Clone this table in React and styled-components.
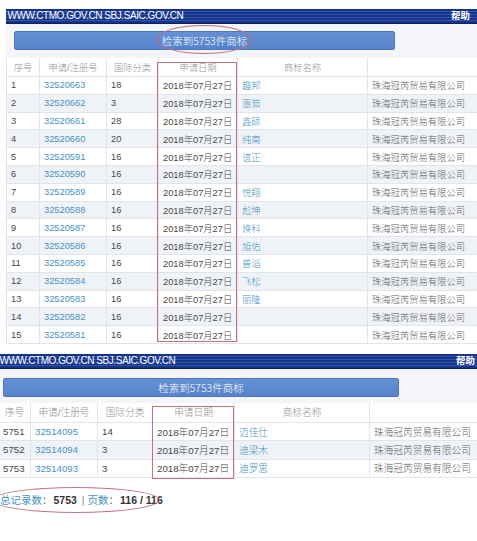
import React from "react";
import styled, { createGlobalStyle } from "styled-components";

const GlobalStyle = createGlobalStyle`
  html, body { margin: 0; padding: 0; background: #fff; }
  body { font-family: "Liberation Sans", "Noto Sans CJK SC", sans-serif; }
  #root { width: 477px; }
`;

const Page = styled.div`
  width: 477px;
  height: 541px;
  overflow: hidden;
  background: #fff;
`;

const Section = styled.section`
  position: relative;
  margin-left: ${(p) => p.$ml}px;
  margin-top: ${(p) => p.$mt}px;
`;

const TopBar = styled.div`
  height: 15px;
  box-sizing: border-box;
  display: flex;
  align-items: center;
  justify-content: space-between;
  padding: 0 ${(p) => p.$pr}px 0 1.5px;
  color: #fff;
  background: repeating-linear-gradient(
    180deg,
    #16338a 0px,
    #16338a 2px,
    #3457aa 2px,
    #3457aa 3px
  );
  border-bottom: 1px solid #0b215f;
`;

const Site = styled.span`
  font-family: "Liberation Sans", sans-serif;
  font-size: 10px;
  letter-spacing: -0.45px;
  line-height: 1;
`;

const Help = styled.span`
  font-family: "Noto Sans CJK SC", sans-serif;
  font-size: 9.5px;
  font-weight: bold;
  line-height: 1;
`;

const SearchArea = styled.div`
  height: 34px;
  box-sizing: border-box;
  background: #f3f5f8;
  padding-top: ${(p) => p.$pt}px;
  padding-left: ${(p) => p.$pl}px;
`;

const SearchButton = styled.div`
  width: ${(p) => p.$w}px;
  height: 19px;
  box-sizing: border-box;
  display: flex;
  align-items: center;
  justify-content: center;
  background: linear-gradient(180deg, #6490d5 0%, #5683cb 100%);
  border: 1px solid #4d77bc;
  border-radius: 2px;
  color: #fff;
  font-family: "Noto Sans CJK SC", sans-serif;
  font-weight: 300;
  font-size: 10.5px;
`;

const Table = styled.div`
  border-left: 1px solid #e1e5ea;
  font-size: ${(p) => p.$fs}px;
  font-weight: 300;
`;

const Row = styled.div`
  display: grid;
  grid-template-columns: ${(p) => p.$cols};
  height: ${(p) => p.$h}px;
  box-sizing: border-box;
  border-bottom: 1px solid #e1e5ea;
  background: ${(p) => (p.$alt ? "#eff3f8" : "#fff")};
`;

const Cell = styled.div`
  display: flex;
  align-items: center;
  justify-content: ${(p) => (p.$head ? "center" : "flex-start")};
  padding-left: ${(p) => (p.$head ? 0 : 4)}px;
  border-right: 1px solid #e1e5ea;
  white-space: nowrap;
  overflow: hidden;
  color: ${(p) =>
    p.$head ? "#939393" : p.$link ? "#4592c2" : p.$muted ? "#5f5f5f" : "#474747"};
  &:last-child {
    border-right: none;
  }
`;

const Mark = styled.div`
  position: absolute;
  left: ${(p) => p.$x}px;
  top: ${(p) => p.$y}px;
  width: ${(p) => p.$w}px;
  height: ${(p) => p.$hh}px;
  box-sizing: border-box;
  border: 1px solid #c9707e;
  border-radius: ${(p) => (p.$round ? "50%" : "0")};
  pointer-events: none;
`;

const Footer = styled.div`
  position: relative;
  margin-top: 9px;
  height: 26px;
  display: flex;
  align-items: center;
  font-size: 10.5px;
  color: #666;
  white-space: nowrap;
`;

const FooterLink = styled.span`
  color: #4592c2;
`;

const FooterValue = styled.b`
  color: #333;
  margin: 0 3px 0 1px;
`;

const Sep = styled.span`
  color: #888;
  margin: 0 3px 0 2px;
`;

const top = [
  ["1", "32520663", "18", "趣邦"],
  ["2", "32520662", "3", "惠茹"],
  ["3", "32520661", "28", "鑫硕"],
  ["4", "32520660", "20", "纯南"],
  ["5", "32520591", "16", "谊正"],
  ["6", "32520590", "16", ""],
  ["7", "32520589", "16", "悦翔"],
  ["8", "32520588", "16", "彪坤"],
  ["9", "32520587", "16", "焕科"],
  ["10", "32520586", "16", "旭佑"],
  ["11", "32520585", "16", "普滔"],
  ["12", "32520584", "16", "飞松"],
  ["13", "32520583", "16", "丽隆"],
  ["14", "32520582", "16", ""],
  ["15", "32520581", "16", ""],
];

const bottom = [
  ["5751", "32514095", "14", "迈佳仕"],
  ["5752", "32514094", "3", "迪梁木"],
  ["5753", "32514093", "3", "迪罗思"],
];

const DATE = "2018年07月27日";
const APPLICANT = "珠海冠芮贸易有限公司";

function Block({ cfg, rows }) {
  return (
    <Section $ml={cfg.ml} $mt={cfg.mt}>
      <TopBar $pr={cfg.helpPr}>
        <Site>WWW.CTMO.GOV.CN SBJ.SAIC.GOV.CN</Site>
        <Help>帮助</Help>
      </TopBar>
      <SearchArea $pt={cfg.btnPt} $pl={cfg.btnPl}>
        <SearchButton $w={cfg.btnW}>检索到5753件商标</SearchButton>
      </SearchArea>
      <Table $fs={cfg.fs}>
        <Row $cols={cfg.cols} $h={cfg.headH}>
          <Cell $head>序号</Cell>
          <Cell $head>申请/注册号</Cell>
          <Cell $head>国际分类</Cell>
          <Cell $head>申请日期</Cell>
          <Cell $head>商标名称</Cell>
          <Cell $head></Cell>
        </Row>
        {rows.map((r, i) => (
          <Row key={r[0]} $cols={cfg.cols} $h={cfg.rowH} $alt={i % 2 === 1}>
            <Cell>{r[0]}</Cell>
            <Cell $link>{r[1]}</Cell>
            <Cell>{r[2]}</Cell>
            <Cell>{DATE}</Cell>
            <Cell $link>{r[3]}</Cell>
            <Cell $muted>{APPLICANT}</Cell>
          </Row>
        ))}
      </Table>
      <Mark $x={cfg.box.x} $y={cfg.box.y} $w={cfg.box.w} $hh={cfg.box.h} />
      {cfg.oval && (
        <Mark $round $x={cfg.oval.x} $y={cfg.oval.y} $w={cfg.oval.w} $hh={cfg.oval.h} />
      )}
    </Section>
  );
}

const cfgTop = {
  ml: 6,
  mt: 9,
  helpPr: 7,
  btnPt: 7,
  btnPl: 8,
  btnW: 381,
  fs: 9.3,
  cols: "33px 67px 52px 79px 130px 1fr",
  headH: 19,
  rowH: 17.8,
  box: { x: 151, y: 53, w: 80, h: 280 },
  oval: { x: 150, y: 16, w: 96, h: 29 },
};

const cfgBottom = {
  ml: -2,
  mt: 10,
  helpPr: 2,
  btnPt: 9,
  btnPl: 5,
  btnW: 396,
  fs: 9.7,
  cols: "32px 67px 55px 82px 135px 1fr",
  headH: 20,
  rowH: 18.3,
  box: { x: 154, y: 52, w: 82, h: 73 },
};

export default function App() {
  return (
    <Page>
      <GlobalStyle />
      <Block cfg={cfgTop} rows={top} />
      <Block cfg={cfgBottom} rows={bottom} />
      <Footer>
        <FooterLink>总记录数</FooterLink>：<FooterValue>5753</FooterValue>
        <Sep>|</Sep>
        <FooterLink>页数</FooterLink>：<FooterValue>116 / 116</FooterValue>
        <Mark $round $x={-8} $y={0} $w={168} $hh={26} />
      </Footer>
    </Page>
  );
}
